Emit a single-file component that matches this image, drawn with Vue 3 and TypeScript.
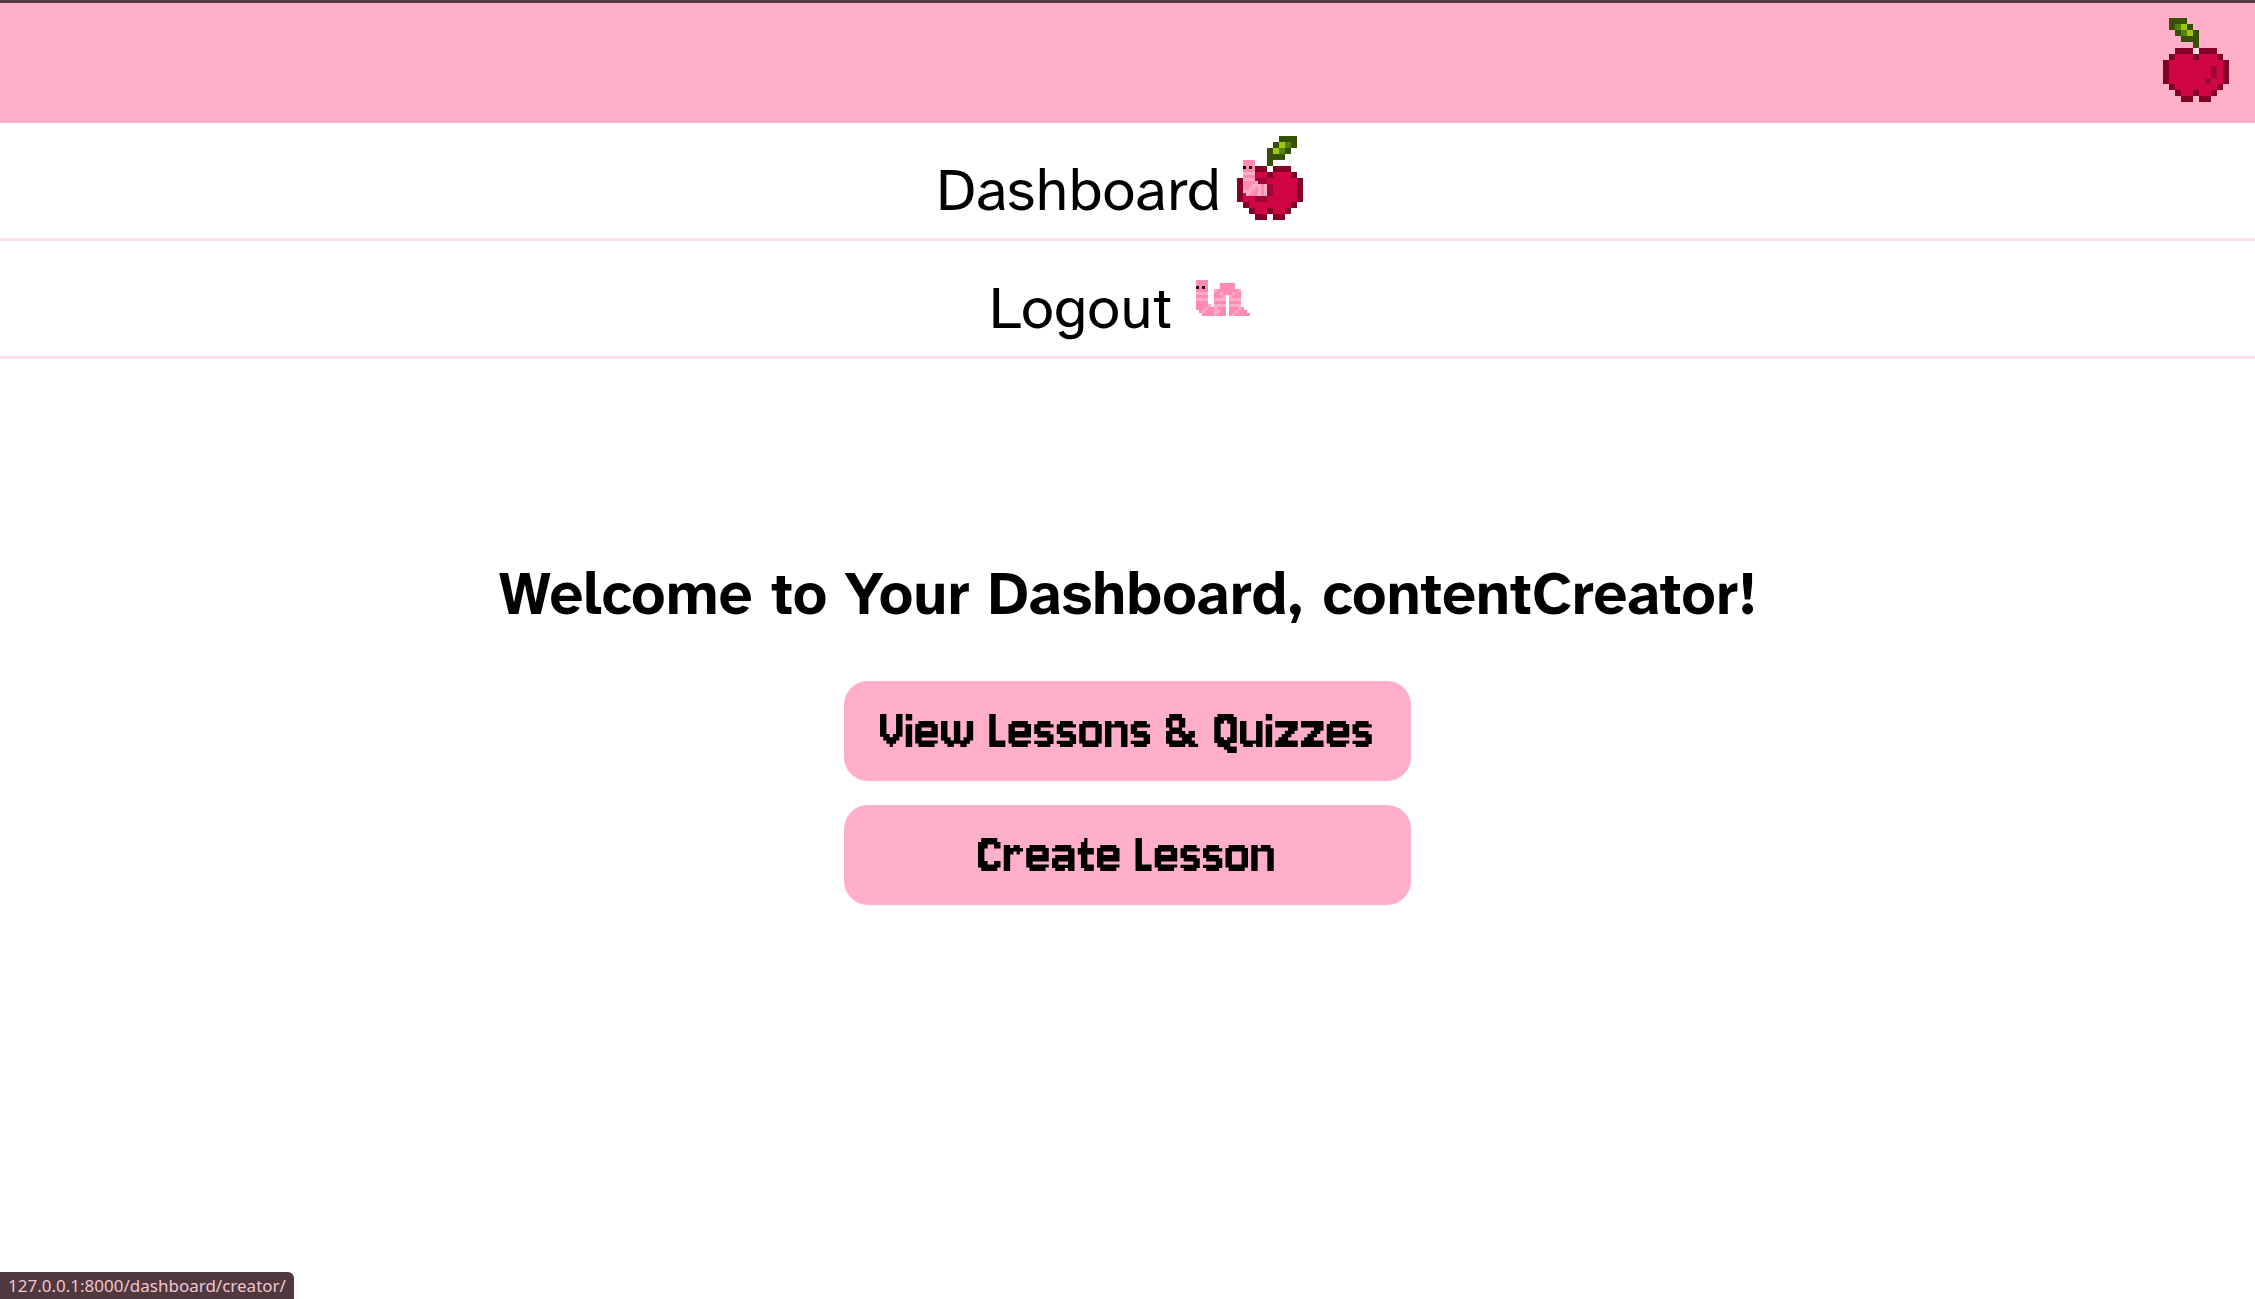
<script setup lang="ts">
interface Run {
  x: number
  y: number
  w: number
  h: number
  c: string
}

const palette: Record<string, string> = {
  g: '#365006',
  m: '#52830d',
  l: '#9fc70b',
  d: '#840029',
  r: '#d00546',
  k: '#9f0536',
  w: '#ffd9e2',
  p: '#ff8cb0',
  q: '#ffadc6',
  b: '#160b10',
}

// Turns rows of palette letters into horizontal runs of pixels
function toRuns(rows: string[]): Run[] {
  const runs: Run[] = []
  rows.forEach((row, y) => {
    let x = 0
    while (x < row.length) {
      const key = row[x]
      let end = x + 1
      while (end < row.length && row[end] === key) end++
      if (key !== '.') runs.push({ x, y, w: end - x, h: 1, c: palette[key] })
      x = end
    }
  })
  return runs
}

const apple = toRuns([
  '.ggg.......',
  '.gmlg......',
  '..gmlg.....',
  '...ggg.....',
  '.....g.....',
  '..dddwddd..',
  '.drrrdrrrd.',
  'drrrrrrrrrd',
  'drrrrrrrkrd',
  'drrrrrrrkrd',
  'drrrrrrkrrd',
  '.drrrrrrrd.',
  '..drrdrrd..',
  '...dd.dd...',
])

const bittenApple = toRuns([
  '.......ggg.',
  '......glmg.',
  '.....glmg..',
  '.....ggg...',
  '.....g.....',
  '...dd.ddd..',
  '..rrrdrrrd.',
  'd..kkrrrrrd',
  'd..rrkrrrrd',
  'drrrrkrrrrd',
  'drrkkrrrrrd',
  '.drrrrrrrd.',
  '..drrdrrd..',
  '...dd.dd...',
])

const appleWorm = toRuns([
  'pppp....',
  'pppp....',
  'bpbp....',
  'pppp....',
  'qqqq....',
  'pppp....',
  'qqqq....',
  'ppppq...',
  'pppqqqpq',
  'ppqqpqpq',
  'qqqppqpq',
  '.qpppqpq',
])

const worm = toRuns([
  'pppp..............',
  'pppp....ppppp.....',
  'bpbp....ppppp.....',
  'pppp..qpppppppq...',
  'qqqq..ppqpppqpp...',
  'pppp..pppq.qppp...',
  'qqqq..qqqq.qqqq...',
  'pppp..pppp.pppp...',
  'ppppq.qqqq.qqqq...',
  'pppqppqppp.pppqp..',
  '.pqpppqqpp.ppqppp.',
  '..ppppqppp.pqppppp',
])
</script>

<template>
  <div class="page">
    <header class="topbar">
      <button class="menu" type="button" aria-label="Menu">
        <svg width="66" height="84" viewBox="0 0 11 14" shape-rendering="crispEdges" aria-hidden="true">
          <rect v-for="(p, i) in apple" :key="i" :x="p.x" :y="p.y" :width="p.w" :height="p.h" :fill="p.c" />
        </svg>
      </button>
    </header>

    <nav class="nav">
      <a class="item" href="#dashboard">
        <span>Dashboard</span>
        <svg class="apple" width="66" height="84" viewBox="0 0 11 14" shape-rendering="crispEdges" aria-hidden="true">
          <rect v-for="(p, i) in bittenApple" :key="i" :x="p.x" :y="p.y" :width="p.w" :height="p.h" :fill="p.c" />
          <svg x="1" y="4" width="4" height="6" viewBox="0 0 8 12">
            <rect v-for="(p, i) in appleWorm" :key="i" :x="p.x" :y="p.y" :width="p.w" :height="p.h" :fill="p.c" />
          </svg>
        </svg>
      </a>
      <a class="item" href="#logout">
        <span>Logout</span>
        <svg class="worm" width="54" height="36" viewBox="0 0 18 12" shape-rendering="crispEdges" aria-hidden="true">
          <rect v-for="(p, i) in worm" :key="i" :x="p.x" :y="p.y" :width="p.w" :height="p.h" :fill="p.c" />
        </svg>
      </a>
    </nav>

    <main class="content">
      <h1>Welcome to Your Dashboard, contentCreator!</h1>
      <div class="actions">
        <button type="button">View Lessons &amp; Quizzes</button>
        <button type="button">Create Lesson</button>
      </div>
    </main>

    <div class="status">127.0.0.1:8000/dashboard/creator/</div>
  </div>
</template>

<style>
body {
  margin: 0;
  background: #fff;
}
</style>

<style scoped>
.page {
  min-height: 100vh;
  color: #000;
  font-family: "Atkinson Hyperlegible Next", "Atkinson Hyperlegible", "Liberation Sans", sans-serif;
}
.topbar {
  display: flex;
  justify-content: flex-end;
  padding: 15px 26px 21px;
  border-top: 3px solid #533a41;
  background: #ffafc7;
}
.menu {
  display: block;
  padding: 0;
  border: 0;
  background: none;
  cursor: pointer;
}
svg {
  display: block;
}
.item {
  display: flex;
  justify-content: center;
  box-sizing: border-box;
  height: 118px;
  padding-top: 13px;
  border-bottom: 3px solid #ffe1e9;
  color: inherit;
  font-size: 60px;
  line-height: 108px;
  text-decoration: none;
}
.apple {
  margin: 0 16px;
}
.worm {
  margin: 26px 16px 0 24px;
}
.content {
  display: flex;
  flex-direction: column;
  align-items: center;
  padding: 200px 24px 48px;
}
h1 {
  margin: 0;
  font-size: 60px;
  line-height: 70px;
  text-align: center;
}
.actions {
  display: grid;
  gap: 24px;
  margin-top: 52px;
}
.actions button {
  height: 100px;
  padding: 0 36px;
  border: 0;
  border-radius: 24px;
  background: #ffafc7;
  color: #000;
  font-family: "Jersey 10", "Liberation Sans", sans-serif;
  font-size: 60px;
  font-weight: 400;
  cursor: pointer;
}
.status {
  position: fixed;
  bottom: 0;
  left: 0;
  padding: 0 8px;
  border-radius: 0 6px 0 0;
  background: #4f383e;
  color: #f0c5d0;
  font-family: "Segoe UI", "Noto Sans", sans-serif;
  font-size: 17px;
  line-height: 27px;
}
</style>
